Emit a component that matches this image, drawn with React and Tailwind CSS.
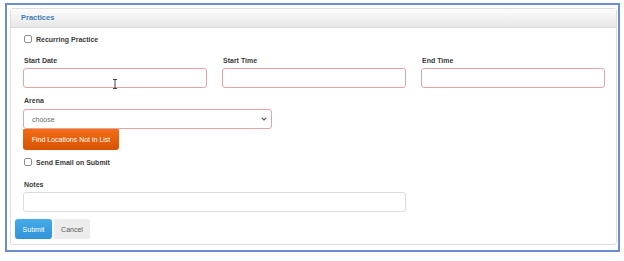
import React from "react";

function Checkbox({ label }) {
    return (
        <div className="flex h-[12px] items-center">
            <span className="ml-[1px] block h-[8px] w-[8px] rounded-[2px] border border-[#8f8f8f] bg-white" />
            <span className="ml-[4px] text-[7px] font-bold leading-none text-[#3a3a3a]">{label}</span>
        </div>
    );
}

function Label({ children, className = "" }) {
    return (
        <div className={`flex h-[10px] items-center pl-[1px] text-[7px] font-bold leading-none text-[#3a3a3a] ${className}`}>
            {children}
        </div>
    );
}

function Field({ label }) {
    return (
        <div>
            <Label>{label}</Label>
            <div className="mt-[3px] h-[20px] rounded-[3px] border border-[#e4a4a6] bg-white" />
        </div>
    );
}

export default function App() {
    return (
        <div className="relative h-[261px] w-[624px] bg-white font-['Liberation_Sans',Arial,sans-serif]">
            <div className="ml-[5px] pt-[3px]">
                <div className="h-[249px] w-[615px] border-2 border-[#6a8ed0] bg-white">
                    <div className="ml-[3px] mt-[3px] w-[607px] rounded-[3px] border border-[#dedede] bg-white">
                        <div className="flex h-[19px] items-center border-b border-[#dcdcdc] bg-linear-to-b from-[#fcfcfc] to-[#e7e7e7] pl-[10px]">
                            <span className="text-[7.5px] font-bold leading-none text-[#3f7fb8]">Practices</span>
                        </div>

                        <div className="px-[12px] pt-[5px]">
                            <Checkbox label="Recurring Practice" />

                            <div className="mt-[10px] grid w-[582px] grid-cols-3 gap-x-[15px]">
                                <Field label="Start Date" />
                                <Field label="Start Time" />
                                <Field label="End Time" />
                            </div>

                            <Label className="mt-[7px]">Arena</Label>
                            <div className="relative mt-[4px] flex h-[20px] w-[249px] items-center rounded-[3px] border border-[#e4a4a6] bg-white pl-[8px]">
                                <span className="text-[7px] leading-none text-[#6a6a6a]">choose</span>
                                <svg className="absolute right-[4px] top-[7px]" width="6" height="4" viewBox="0 0 6 4">
                                    <path d="M0.8 0.8 L3 3 L5.2 0.8" fill="none" stroke="#555" strokeWidth="1.1" />
                                </svg>
                            </div>
                            <button
                                type="button"
                                className="flex h-[21px] w-[96px] items-center justify-center rounded-b-[3px] rounded-t-[1px] bg-linear-to-b from-[#f26d14] to-[#d85203] text-[7px] leading-none text-white"
                            >
                                Find Locations Not in List
                            </button>

                            <div className="mt-[6px]">
                                <Checkbox label="Send Email on Submit" />
                            </div>

                            <Label className="mt-[11px]">Notes</Label>
                            <div className="mt-[3px] h-[20px] w-[383px] rounded-[3px] border border-[#dcdcdc] bg-white" />
                        </div>

                        <div className="mt-[7px] flex gap-[2px] pb-[5px] pl-[4px]">
                            <button
                                type="button"
                                className="flex h-[20px] w-[37px] items-center justify-center rounded-[3px] bg-linear-to-b from-[#45abe8] to-[#2f93d8] text-[7px] leading-none text-white"
                            >
                                Submit
                            </button>
                            <button
                                type="button"
                                className="flex h-[20px] w-[36px] items-center justify-center rounded-[2px] bg-[#ececec] text-[7px] leading-none text-[#5a5a5a]"
                            >
                                Cancel
                            </button>
                        </div>
                    </div>
                </div>
            </div>

            <svg className="absolute left-[112px] top-[79px]" width="6" height="10" viewBox="0 0 6 10">
                <path d="M1 0.5 H5 M3 0.5 V9.5 M1 9.5 H5" fill="none" stroke="#444" strokeWidth="1" />
            </svg>
        </div>
    );
}
